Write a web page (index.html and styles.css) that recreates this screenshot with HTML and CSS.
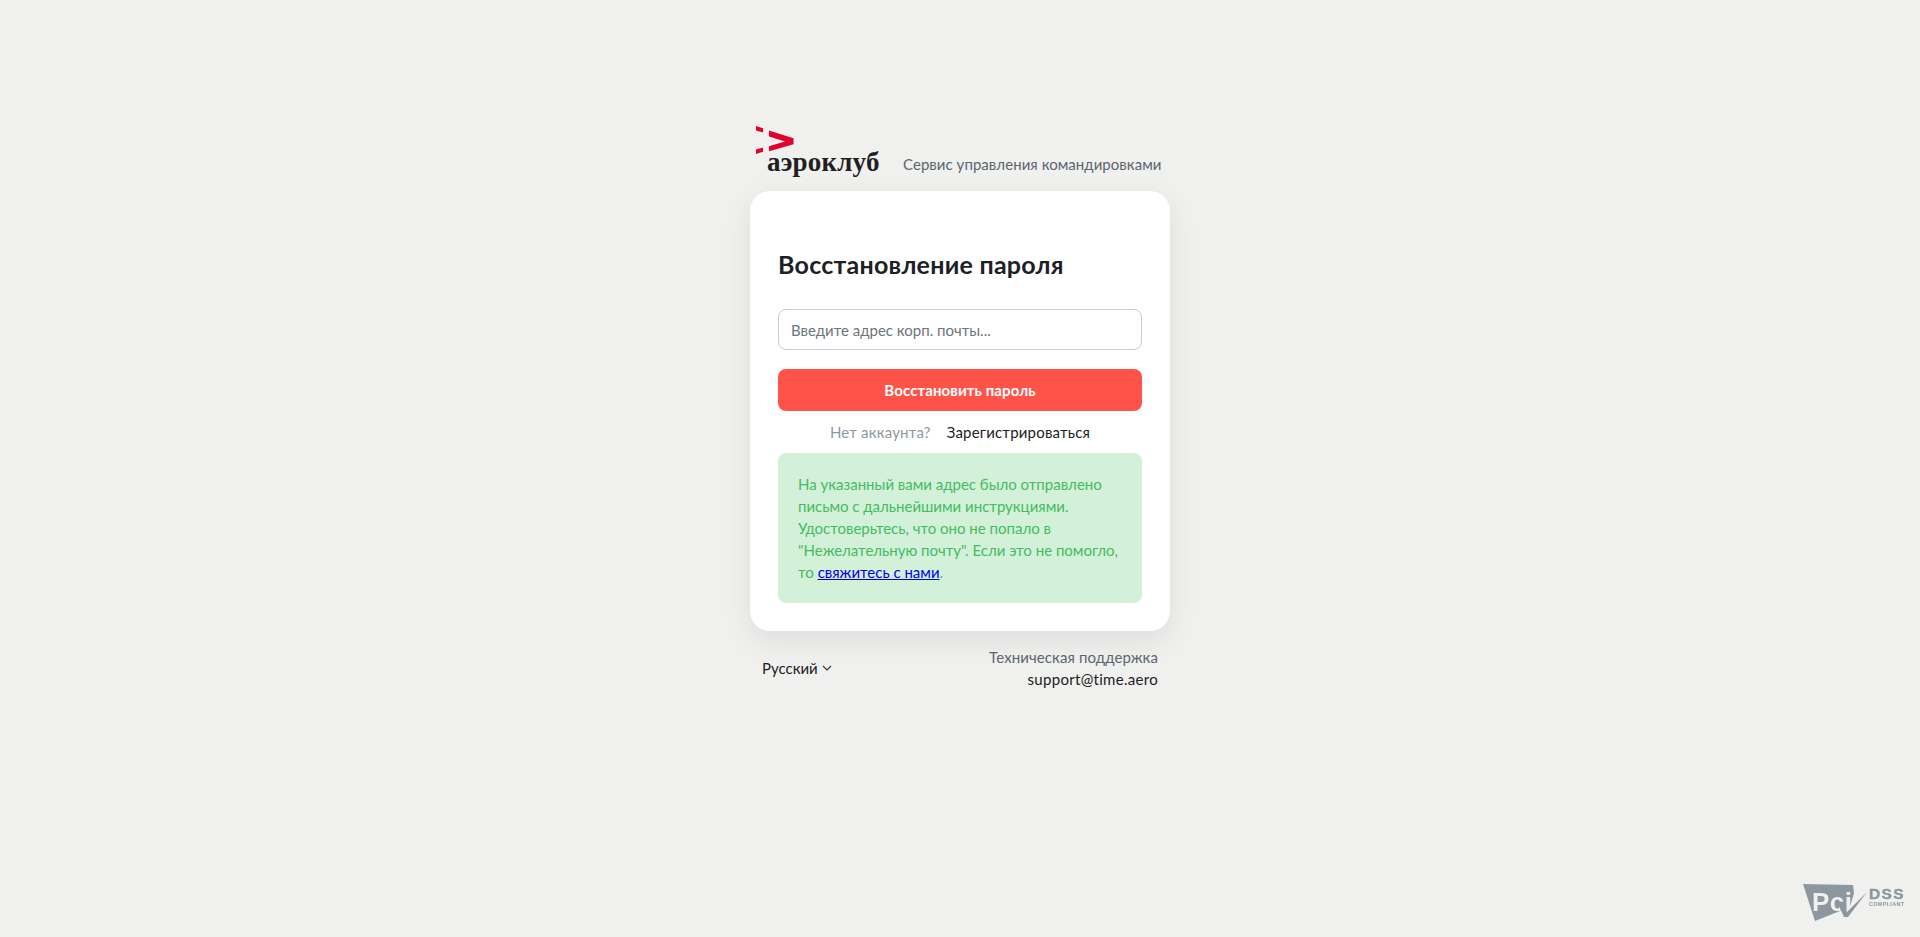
FILE: index.html
```html
<!DOCTYPE html>
<html lang="ru">
<head>
    <meta charset="UTF-8">
    <meta name="viewport" content="width=device-width, initial-scale=1.0">
    <title>Восстановление пароля</title>
    <link rel="stylesheet" href="styles.css">
</head>
<body>
    <div class="wrapper">
        <div class="header">
            <div class="logo">
                <svg class="logo-mark" width="42" height="34" viewBox="0 0 42 34">
                    <path fill="#e4002b" d="M0 0l7 2.300v4.200l-7-2zM0 23.500l7-2v4.200l-7 2.300zM13 4.500l24.500 7.700v6l-24.500 7v-5l16-4.700-16-5z"/>
                </svg>
                <span class="logo-text">аэроклуб</span>
            </div>
            <span class="tagline">Сервис управления командировками</span>
        </div>
        <div class="card">
            <h2>Восстановление пароля</h2>
            <input type="text" class="field" placeholder="Введите адрес корп. почты...">
            <button class="submit">Восстановить пароль</button>
            <div class="signup">
                <span class="muted">Нет аккаунта?</span>
                <a href="#" class="signup-link">Зарегистрироваться</a>
            </div>
            <div class="notice">
                На указанный вами адрес было отправлено<br>
                письмо с дальнейшими инструкциями.<br>
                Удостоверьтесь, что оно не попало в<br>
                "Нежелательную почту". Если это не помогло,<br>
                то <a href="#">свяжитесь с нами</a>.
            </div>
        </div>
        <div class="footer">
            <div class="lang">
                Русский
                <svg width="10" height="6" viewBox="0 0 10 6"><path d="M1 1l4 4 4-4" fill="none" stroke="#333" stroke-width="1.100"/></svg>
            </div>
            <div class="support">
                <div class="support-title">Техническая поддержка</div>
                <a href="#" class="support-mail">support@time.aero</a>
            </div>
        </div>
    </div>
    <svg class="pci" width="130" height="67" viewBox="0 0 130 67">
        <path fill="#8c979f" d="M13 14l50 1 1 8-5 17-9 1-25 10z"/>
        <text x="22" y="41" class="pci-text">Pci</text>
        <path fill="#8c979f" d="M49 36l5 0 3 6 20-20-19 25-4 0z"/>
        <text x="79" y="29" class="dss-text">DSS</text>
        <text x="79" y="36" class="compliant-text">COMPLIANT</text>
    </svg>
</body>
</html>
```

FILE: styles.css
```css
body {
    font-family: Lato, "Noto Sans", sans-serif;
    margin: 0;
    padding: 0;
    height: 937px;
    overflow: hidden;
    background: #f0f0ee;
    color: #1c2126;
}
.wrapper {
    width: 420px;
    margin: 0 auto;
    padding-top: 124px;
}
.header {
    display: flex;
    align-items: flex-start;
    height: 67px;
    padding-left: 6px;
    box-sizing: border-box;
}
.logo {
    width: 147px;
    height: 53px;
    position: relative;
    flex-shrink: 0;
}
.logo-mark {
    display: block;
    margin-top: 2px;
}
.logo-text {
    position: absolute;
    left: 11px;
    top: 23px;
    font-family: "Liberation Serif", serif;
    font-weight: bold;
    font-size: 27px;
    letter-spacing: 0.2px;
    line-height: 30px;
    color: #1f1f1f;
}
.tagline {
    font-size: 15px;
    line-height: 18px;
    color: #5c6670;
    margin-top: 31px;
    letter-spacing: 0.05px;
    white-space: nowrap;
}
.card {
    background: #fff;
    border-radius: 20px;
    padding: 59px 28px 28px;
    box-shadow: 0 10px 30px rgba(0, 0, 0, 0.08);
    height: 440px;
    box-sizing: border-box;
}
h2 {
    margin: 0 0 31px;
    font-size: 25px;
    line-height: 28px;
    font-weight: 700;
    color: #1c2126;
    letter-spacing: 0.25px;
}
.field {
    display: block;
    width: 100%;
    height: 41px;
    box-sizing: border-box;
    border: 1px solid #c5d0da;
    border-radius: 8px;
    padding: 0 12px;
    font-family: inherit;
    font-size: 15px;
    margin-bottom: 19px;
}
.field::placeholder {
    color: #6d757d;
    opacity: 1;
}
.submit {
    display: block;
    width: 100%;
    height: 42px;
    border: none;
    border-radius: 8px;
    background: #ff5349;
    color: #fff;
    font-family: inherit;
    font-size: 15px;
    font-weight: 700;
    letter-spacing: 0.1px;
    cursor: pointer;
}
.signup {
    display: flex;
    justify-content: center;
    gap: 16px;
    height: 42px;
    align-items: center;
    font-size: 15px;
    letter-spacing: 0.2px;
}
.muted {
    color: #8f98a1;
}
.signup-link {
    color: #1c2126;
    text-decoration: none;
}
.notice {
    height: 150px;
    box-sizing: border-box;
    padding: 20px 10px 20px 20px;
    border-radius: 8px;
    background: #d3f0d8;
    color: #42bd60;
    font-size: 15px;
    line-height: 22px;
    white-space: nowrap;
}
.notice a {
    color: #0000ee;
}
.footer {
    display: flex;
    justify-content: space-between;
    align-items: center;
    padding: 15px 12px 0;
    font-size: 15px;
}
.lang {
    display: flex;
    align-items: center;
    gap: 4px;
}
.support {
    text-align: right;
    line-height: 22px;
}
.support-title {
    color: #5c6670;
    letter-spacing: 0.1px;
}
.support-mail {
    color: #1c2126;
    text-decoration: none;
    letter-spacing: 0.3px;
}
.pci {
    position: fixed;
    right: 0;
    bottom: 0;
}
.pci-text {
    font-family: "Liberation Sans", sans-serif;
    font-weight: bold;
    font-size: 26px;
    letter-spacing: 0.5px;
    fill: #f0f0ee;
}
.dss-text {
    font-family: "Liberation Sans", sans-serif;
    font-weight: bold;
    font-size: 15.500px;
    letter-spacing: 1.300px;
    stroke: #8c979f;
    stroke-width: 0.4px;
    fill: #8c979f;
}
.compliant-text {
    font-family: "Liberation Sans", sans-serif;
    font-weight: bold;
    font-size: 5.500px;
    letter-spacing: 0.3px;
    fill: #8c979f;
}
```
